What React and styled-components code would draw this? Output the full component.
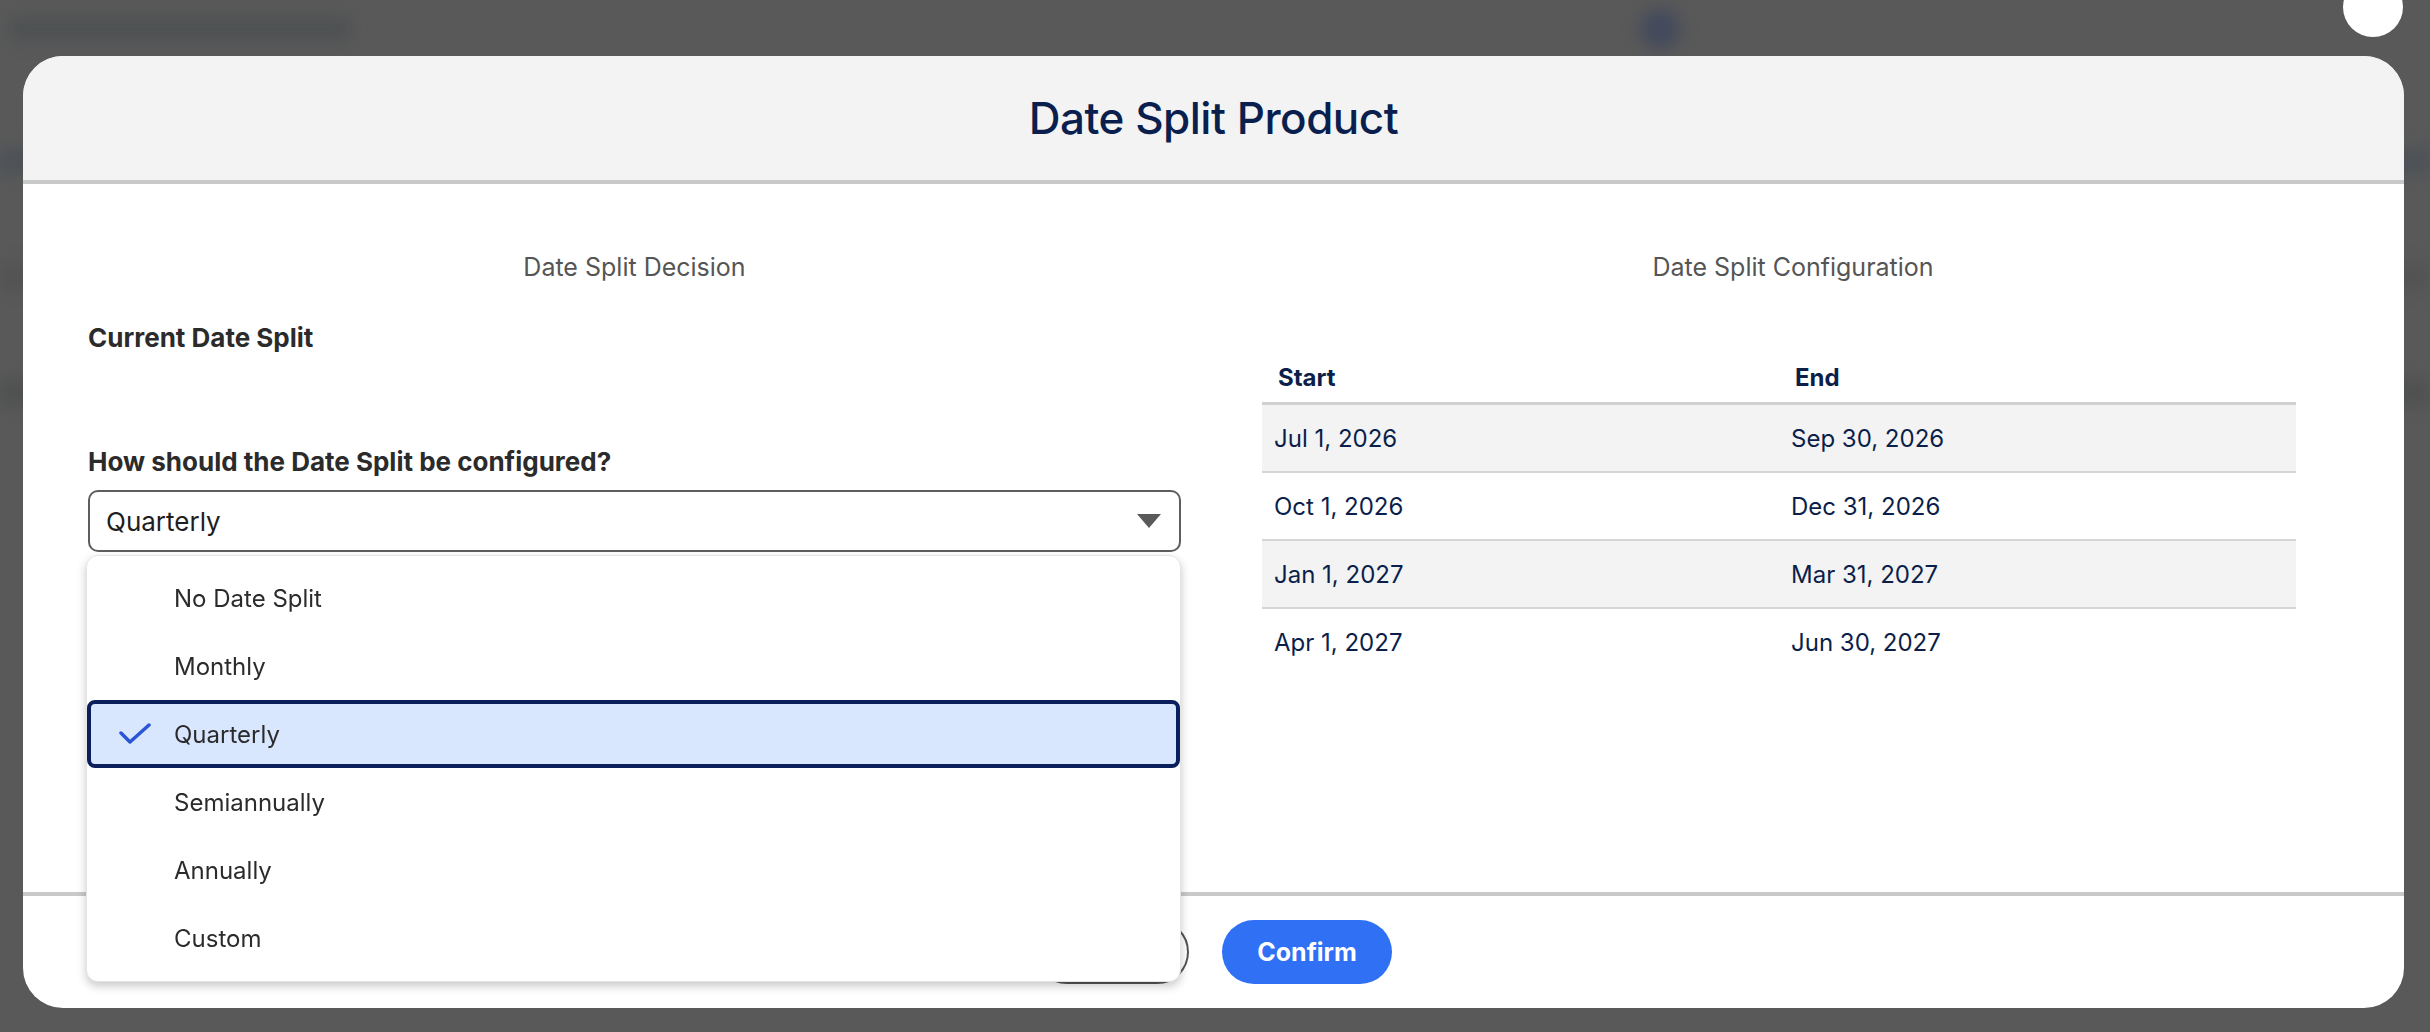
import React from "react"
import styled, { createGlobalStyle } from "styled-components"

const options = ["No Date Split", "Monthly", "Quarterly", "Semiannually", "Annually", "Custom"]
const selected = "Quarterly"

const periods = [
  ["Jul 1, 2026", "Sep 30, 2026"],
  ["Oct 1, 2026", "Dec 31, 2026"],
  ["Jan 1, 2027", "Mar 31, 2027"],
  ["Apr 1, 2027", "Jun 30, 2027"],
]

const CheckIcon = () => (
  <svg width="32" height="22" viewBox="0 0 32 22">
    <path d="M2 10 L11 19 L30 2" fill="none" stroke="#2a55d6" strokeWidth="3.5" strokeLinecap="round" strokeLinejoin="round" />
  </svg>
)

const CaretIcon = () => (
  <svg width="24" height="14" viewBox="0 0 24 14">
    <path d="M0 0 H24 L12 14 Z" fill="#5a5a5a" />
  </svg>
)

const App = () => {
  return (
    <Page>
      <GlobalStyle />
      <Backdrop>
        <BlurTop>
          <BlurText />
          <BlurDot />
        </BlurTop>
        <BlurBand $tone="#4d5257" />
        <BlurBand $tone="#535353" />
        <BlurBand $tone="#4f5050" />
      </Backdrop>

      <Modal>
        <CloseButton />
        <Header>
          <Title>Date Split Product</Title>
        </Header>

        <Body>
          <Column>
            <ColumnTitle>Date Split Decision</ColumnTitle>
            <Label>Current Date Split</Label>
            <Label $gap="92px">How should the Date Split be configured?</Label>
            <SelectWrap>
              <Select>
                <span>{selected}</span>
                <CaretIcon />
              </Select>
              <Dropdown>
                {options.map((opt) => (
                  <Option key={opt} $active={opt === selected}>
                    <CheckSlot>{opt === selected && <CheckIcon />}</CheckSlot>
                    {opt}
                  </Option>
                ))}
              </Dropdown>
            </SelectWrap>
          </Column>

          <Column>
            <ColumnTitle>Date Split Configuration</ColumnTitle>
            <Table>
              <thead>
                <tr>
                  <Th>Start</Th>
                  <Th>End</Th>
                </tr>
              </thead>
              <tbody>
                {periods.map(([start, end], i) => (
                  <Row key={start} $shaded={i % 2 === 0}>
                    <Td>{start}</Td>
                    <Td>{end}</Td>
                  </Row>
                ))}
              </tbody>
            </Table>
          </Column>
        </Body>

        <Footer>
          <OutlineButton>Cancel</OutlineButton>
          <PrimaryButton>Confirm</PrimaryButton>
        </Footer>
      </Modal>
    </Page>
  )
}

export default App

//~~~~~~~~~~~~~~~~~~~
// Styled-Components
//~~~~~~~~~~~~~~~~~~~

const GlobalStyle = createGlobalStyle`
  html, body {
    margin: 0;
    padding: 0;
    overflow: hidden;
  }
  body {
    font-family: Inter, "Liberation Sans", sans-serif;
  }
`

const Page = styled.div`
  width: 100vw;
  height: 100vh;
  background: #595959;
  overflow: hidden;
`

const Backdrop = styled.div`
  display: flex;
  flex-direction: column;
  gap: 90px;
  filter: blur(8px);
`

const BlurTop = styled.div`
  display: flex;
  align-items: center;
  justify-content: space-between;
  height: 58px;
  padding: 0 750px 0 10px;
`

const BlurText = styled.div`
  width: 340px;
  height: 24px;
  background: #4e5153;
`

const BlurDot = styled.div`
  width: 40px;
  height: 40px;
  border-radius: 50%;
  background: #434a5c;
`

const BlurBand = styled.div`
  height: 26px;
  background: ${(p) => p.$tone};
`

const Modal = styled.div`
  position: fixed;
  top: 56px;
  left: 23px;
  width: 2381px;
  height: 952px;
  display: flex;
  flex-direction: column;
  background: #fff;
  border-radius: 40px;
`

const CloseButton = styled.div`
  position: absolute;
  top: -79px;
  right: 1px;
  width: 60px;
  height: 60px;
  border-radius: 50%;
  background: #fff;
`

const Header = styled.div`
  height: 124px;
  display: flex;
  align-items: center;
  justify-content: center;
  background: #f3f3f3;
  border-bottom: 4px solid #c9c9c9;
  border-radius: 40px 40px 0 0;
`

const Title = styled.h1`
  margin: 0;
  font-size: 44px;
  font-weight: 500;
  color: #0b1f4f;
  letter-spacing: -0.5px;
`

const Body = styled.div`
  flex: 1;
  display: grid;
  grid-template-columns: 1093px 1062px;
  column-gap: 81px;
  padding: 67px 0 0 65px;
`

const Column = styled.div`
  display: flex;
  flex-direction: column;
`

const ColumnTitle = styled.div`
  font-size: 25px;
  line-height: 32px;
  color: #555;
  text-align: center;
`

const Label = styled.div`
  margin-top: ${(p) => p.$gap || "39px"};
  font-size: 26px;
  line-height: 32px;
  font-weight: 700;
  color: #2b2b2b;
`

const SelectWrap = styled.div`
  position: relative;
  margin-top: 12px;
`

const Select = styled.div`
  height: 62px;
  box-sizing: border-box;
  display: flex;
  align-items: center;
  justify-content: space-between;
  padding: 0 18px 0 16px;
  border: 2px solid #5e5e5e;
  border-radius: 10px;
  font-size: 26px;
  color: #1e1e1e;
`

const Dropdown = styled.div`
  position: absolute;
  top: 65px;
  left: -2px;
  width: 1095px;
  box-sizing: border-box;
  padding: 8px 0 9px;
  background: #fff;
  border: 1px solid #e4e4e4;
  border-radius: 12px;
  box-shadow: 0 4px 10px rgba(0, 0, 0, 0.22);
  z-index: 2;
`

const Option = styled.div`
  height: 68px;
  box-sizing: border-box;
  display: flex;
  align-items: center;
  font-size: 24px;
  color: #2b2b2b;
  border: 4px solid ${(p) => (p.$active ? "#0b1f5c" : "transparent")};
  border-radius: 8px;
  background: ${(p) => (p.$active ? "#d8e6fe" : "transparent")};
`

const CheckSlot = styled.span`
  width: 83px;
  padding-left: 28px;
  box-sizing: border-box;
  display: flex;
  align-items: center;
`

const Table = styled.table`
  width: 1034px;
  margin-top: 69px;
  border-collapse: collapse;
  color: #0b1f4a;
  font-size: 24px;
`

const Th = styled.th`
  height: 50px;
  padding: 0 16px;
  text-align: left;
  font-weight: 700;
  border-bottom: 3px solid #d0d0d0;
`

const Row = styled.tr`
  background: ${(p) => (p.$shaded ? "#f3f3f3" : "#fff")};
  border-bottom: 2px solid #d6d6d6;

  &:last-child {
    border-bottom: none;
  }
`

const Td = styled.td`
  height: 66px;
  padding: 0 12px;
  width: 50%;
`

const Footer = styled.div`
  height: 112px;
  display: flex;
  align-items: center;
  justify-content: center;
  gap: 33px;
  border-top: 4px solid #c9c9c9;
`

const ButtonBase = styled.button`
  height: 64px;
  border-radius: 32px;
  font-family: inherit;
  font-size: 25px;
  font-weight: 700;
  cursor: pointer;
`

const OutlineButton = styled(ButtonBase)`
  width: 154px;
  background: #fff;
  color: #2b2b2b;
  border: 2px solid #555;
`

const PrimaryButton = styled(ButtonBase)`
  width: 170px;
  background: #3070f5;
  color: #fff;
  border: none;
`
